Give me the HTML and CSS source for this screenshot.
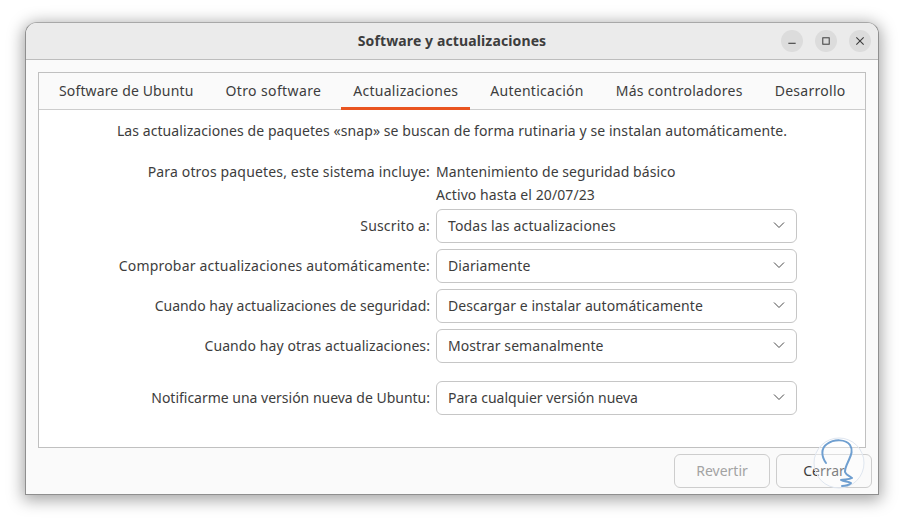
FILE: index.html
```html
<!DOCTYPE html>
<html lang="es">
<head>
<meta charset="utf-8">
<title>Software y actualizaciones</title>
<link rel="stylesheet" href="styles.css">
</head>
<body>
<main class="window">
  <header class="titlebar">
    <h1 class="title">Software y actualizaciones</h1>
    <div class="controls">
      <span class="ctl"><svg width="24" height="24" viewBox="0 0 24 24"><path d="M8 14.5h8" stroke="#3d3d3d" stroke-width="1.2" fill="none"/></svg></span>
      <span class="ctl"><svg width="24" height="24" viewBox="0 0 24 24"><rect x="8.5" y="8.5" width="7" height="7" stroke="#3d3d3d" stroke-width="1.1" fill="none"/></svg></span>
      <span class="ctl"><svg width="24" height="24" viewBox="0 0 24 24"><path d="M8 8l8 8M16 8l-8 8" stroke="#3d3d3d" stroke-width="1.2" fill="none"/></svg></span>
    </div>
  </header>
  <div class="content">
    <section class="notebook">
      <nav class="tabs">
        <span class="tab first">Software de Ubuntu</span>
        <span class="tab roomy">Otro software</span>
        <span class="tab active">Actualizaciones</span>
        <span class="tab">Autenticación</span>
        <span class="tab">Más controladores</span>
        <span class="tab">Desarrollo</span>
      </nav>
      <div class="page">
        <p class="note">Las actualizaciones de paquetes «snap» se buscan de forma rutinaria y se instalan automáticamente.</p>
        <div class="form">
          <span class="label info1 wide">Para otros paquetes, este sistema incluye:</span>
          <span class="value info1">Mantenimiento de seguridad básico</span>
          <span></span>
          <span class="value info2">Activo hasta el 20/07/23</span>

          <span class="label wide">Suscrito a:</span>
          <div class="combo"><span class="wide">Todas las actualizaciones</span><svg class="chev" width="12" height="8" viewBox="0 0 12 8"><path d="M1 1.5l5 5 5-5" fill="none" stroke="#4a4a4a" stroke-width="1"/></svg></div>

          <span class="label wider">Comprobar actualizaciones automáticamente:</span>
          <div class="combo"><span>Diariamente</span><svg class="chev" width="12" height="8" viewBox="0 0 12 8"><path d="M1 1.5l5 5 5-5" fill="none" stroke="#4a4a4a" stroke-width="1"/></svg></div>

          <span class="label tight">Cuando hay actualizaciones de seguridad:</span>
          <div class="combo"><span>Descargar e instalar automáticamente</span><svg class="chev" width="12" height="8" viewBox="0 0 12 8"><path d="M1 1.5l5 5 5-5" fill="none" stroke="#4a4a4a" stroke-width="1"/></svg></div>

          <span class="label">Cuando hay otras actualizaciones:</span>
          <div class="combo"><span>Mostrar semanalmente</span><svg class="chev" width="12" height="8" viewBox="0 0 12 8"><path d="M1 1.5l5 5 5-5" fill="none" stroke="#4a4a4a" stroke-width="1"/></svg></div>

          <span class="label spaced tight">Notificarme una versión nueva de Ubuntu:</span>
          <div class="combo spaced"><span class="tight">Para cualquier versión nueva</span><svg class="chev" width="12" height="8" viewBox="0 0 12 8"><path d="M1 1.5l5 5 5-5" fill="none" stroke="#4a4a4a" stroke-width="1"/></svg></div>
        </div>
      </div>
    </section>
    <footer class="actions">
      <button class="btn" disabled>Revertir</button>
      <button class="btn">Cerrar</button>
    </footer>
  </div>
  <svg class="mark" width="54" height="54" viewBox="0 0 54 54">
    <circle cx="27" cy="27" r="25" fill="#ffffff" fill-opacity="0.35" stroke="#dfe6f0" stroke-width="1"/>
    <path d="M14 27C9 20 9 12 15 8C22 3 34 3 38 9C42 15 38 21 36 26C34 30 33 33 33 36C34 39 38 40 40 42C37 44 32 43 29 44C32 46 36 45 39 47C37 49 33 50 30 50" fill="none" stroke="#6f9fd0" stroke-width="2" stroke-linecap="round" stroke-linejoin="round"/>
  </svg>
</main>
</body>
</html>
```
FILE: styles.css
```css
* { box-sizing: border-box; }
html, body { margin: 0; padding: 0; }
body {
  width: 904px;
  height: 523px;
  background: #fff;
  padding: 22px 25px 28px 25px;
  font-family: "Noto Sans", "Liberation Sans", sans-serif;
  font-size: 14px;
  letter-spacing: 0.08px;
  color: #3d3d3d;
  overflow: hidden;
}
.window {
  position: relative;
  width: 854px;
  height: 473px;
  background: #fafafa;
  border: 1px solid #8f8f8f;
  border-top-color: #a8a8a8;
  border-radius: 12px 12px 0 0;
  box-shadow: 0 3px 16px 2px rgba(0, 0, 0, 0.36);
  display: flex;
  flex-direction: column;
}
.titlebar {
  height: 37px;
  flex: none;
  background: #ebebeb;
  border-bottom: 1px solid #bdbdbd;
  border-radius: 11px 11px 0 0;
  display: flex;
  align-items: center;
  justify-content: center;
  position: relative;
  padding-bottom: 2px;
}
.title { margin: 0; font-size: 14px; font-weight: 700; color: #3d3d3d; letter-spacing: 0.12px; }
.controls {
  position: absolute;
  right: 7px;
  top: 7px;
  display: flex;
  gap: 12px;
}
.ctl {
  width: 22px;
  height: 22px;
  border-radius: 50%;
  background: #dcdcdc;
  display: flex;
  align-items: center;
  justify-content: center;
}
.content {
  flex: 1;
  padding: 12px 12px 0 12px;
  display: flex;
  flex-direction: column;
}
.notebook {
  height: 376px;
  flex: none;
  border: 1px solid #c0c0c0;
  display: flex;
  flex-direction: column;
  background: #fff;
}
.tabs {
  height: 37px;
  flex: none;
  background: #fafafa;
  border-bottom: 1px solid #cdcdcd;
  display: flex;
  gap: 8px;
  padding: 0 8px;
}
.tab {
  padding: 0 12px;
  line-height: 35px;
  white-space: nowrap;
  position: relative;
  letter-spacing: 0.27px;
}
.tab.first { letter-spacing: 0.14px; }
.tab.roomy { letter-spacing: 0.38px; }
.tab.active::after {
  content: "";
  position: absolute;
  left: 0;
  right: 0;
  bottom: -1px;
  height: 3px;
  background: #e95420;
}
.page { flex: 1; padding: 11px 0 0; }
.note { margin: 0; text-align: center; line-height: 19px; }
.form {
  margin-top: 22px;
  display: grid;
  grid-template-columns: 391px 361px;
  column-gap: 6px;
  align-items: center;
}
.label { text-align: right; line-height: 20px; margin-bottom: 6px; }
.value { line-height: 20px; }
.info1 { height: 20px; }
.info2 { height: 20px; margin-top: 3px; margin-bottom: 4px; }
.label.info1 { margin-bottom: 0; }
.wide { letter-spacing: 0.16px; }
.wider { letter-spacing: 0.2px; }
.tight { letter-spacing: -0.01px; }
.combo {
  height: 34px;
  margin-bottom: 6px;
  background: #fff;
  border: 1px solid #c6c6c6;
  border-radius: 6px;
  padding: 0 11px 2px 11px;
  display: flex;
  align-items: center;
  justify-content: space-between;
}
.spaced { margin-top: 12px; }
.chev { flex: none; }
.actions {
  flex: 1;
  display: flex;
  justify-content: flex-end;
  gap: 6px;
  padding: 6px 6px 0 0;
  margin-right: -12px;
}
.btn {
  width: 96px;
  height: 34px;
  background: #fafafa;
  border: 1px solid #cdcdcd;
  border-radius: 6px;
  font: inherit;
  color: #3d3d3d;
  padding: 0 0 2px;
}
.btn:disabled { color: #a3a3a3; }
.mark { position: absolute; left: 786px; top: 413px; }
```
